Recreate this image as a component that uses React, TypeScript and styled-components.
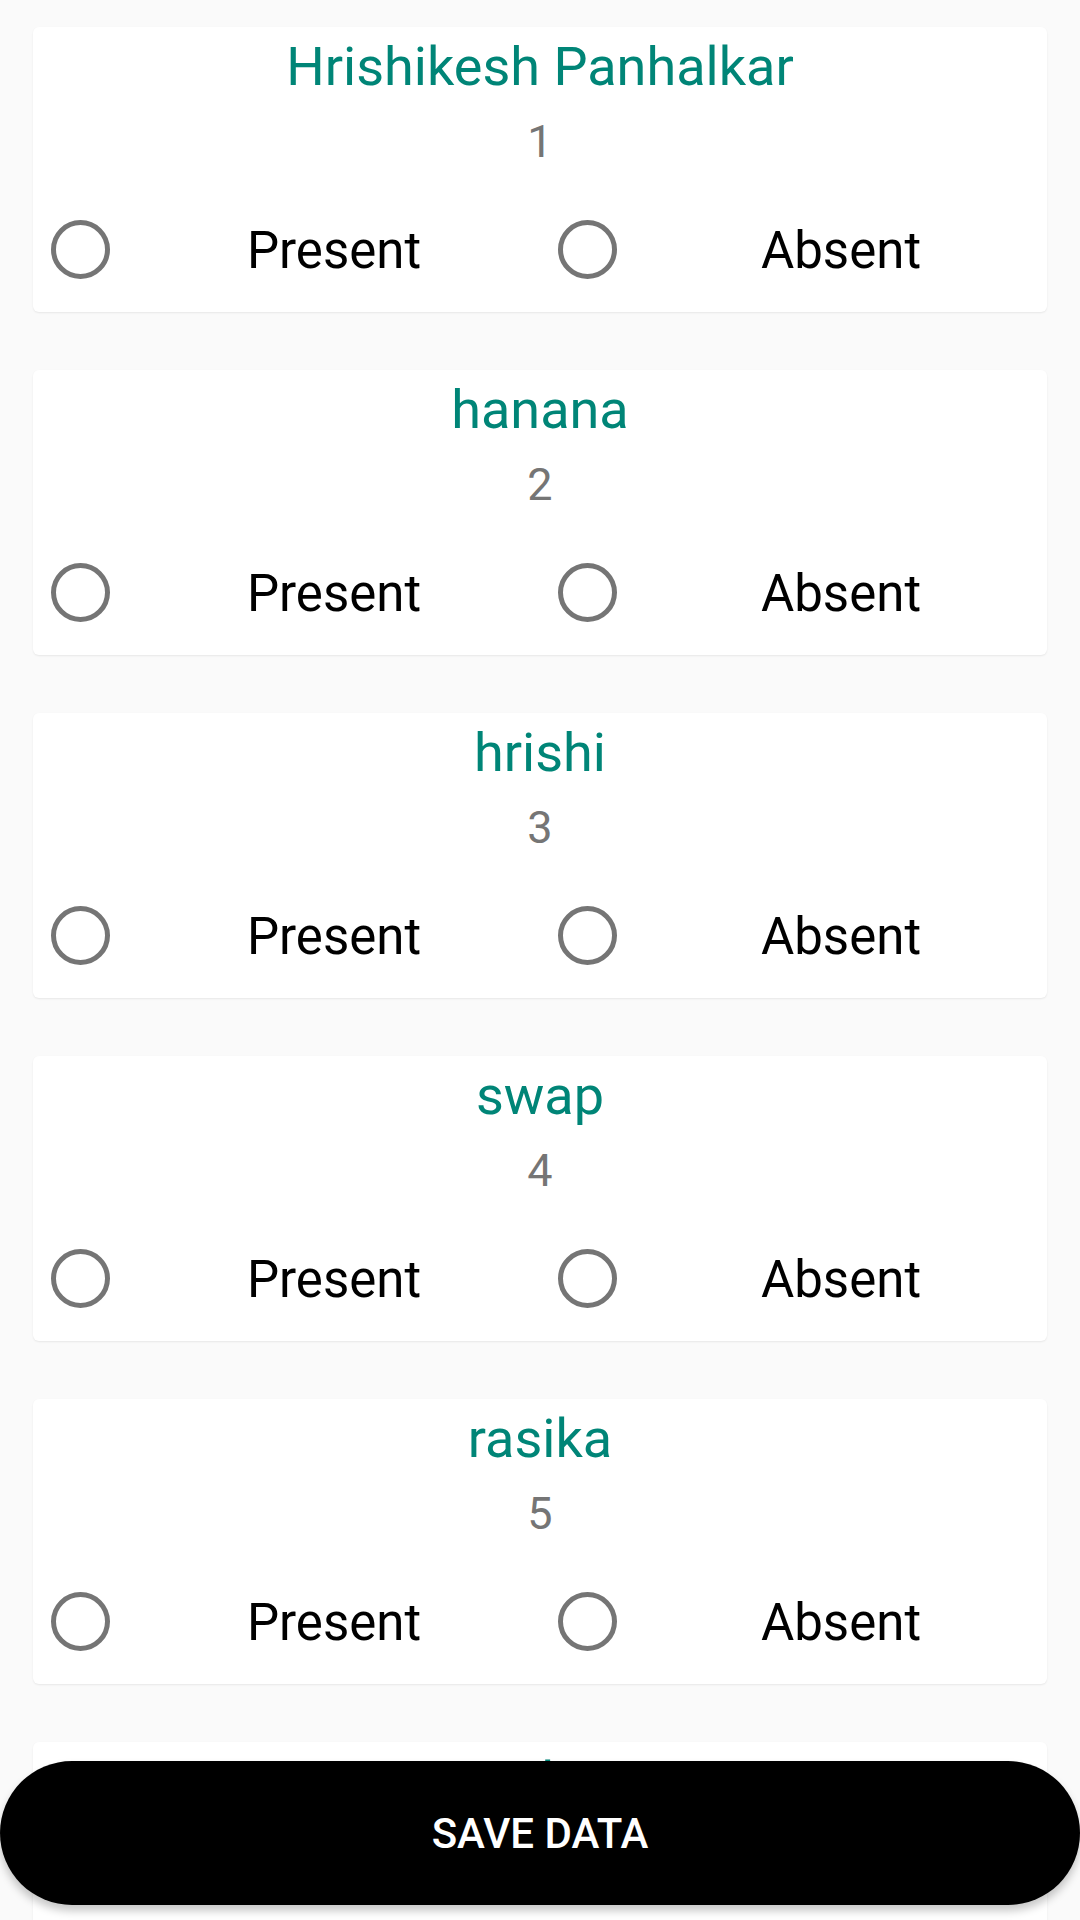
import React from 'react';
import styled, { createGlobalStyle } from 'styled-components';

const GlobalStyle = createGlobalStyle`
  html, body {
    margin: 0;
    padding: 0;
    background: #fafafa;
    font-family: Roboto, "Noto Sans", "Liberation Sans", sans-serif;
  }
`;

const Screen = styled.div`
  position: relative;
  width: 1080px;
  height: 1920px;
  overflow: hidden;
  background: #fafafa;
`;

const List = styled.div`
  display: flex;
  flex-direction: column;
  gap: 58px;
  padding: 27px 33px 0;
`;

const Card = styled.section`
  display: flex;
  flex-direction: column;
  align-items: center;
  height: 285px;
  box-sizing: border-box;
  padding: 9px 0 21px;
  background: #ffffff;
  border-radius: 6px;
  box-shadow: 0 1px 2px rgba(0, 0, 0, 0.08);
`;

const Name = styled.h2`
  margin: 0 0 17px;
  font-size: 54px;
  line-height: 62px;
  font-weight: 400;
  color: #008577;
`;

const RollNo = styled.div`
  margin-bottom: 38px;
  font-size: 45px;
  line-height: 54px;
  color: #757575;
`;

const RadioGroup = styled.div`
  align-self: stretch;
  display: grid;
  grid-template-columns: 1fr 1fr;
  height: 84px;
`;

const RadioButton = styled.label`
  display: flex;
  align-items: center;
`;

const RadioSlot = styled.span`
  display: flex;
  align-items: center;
  width: 95px;
  padding-left: 18px;
  box-sizing: border-box;
`;

const Ring = styled.span`
  display: block;
  width: 59px;
  height: 59px;
  box-sizing: border-box;
  border: 5px solid #757575;
  border-radius: 50%;
`;

const RadioLabel = styled.span`
  flex: 1;
  padding-top: 4px;
  text-align: center;
  font-size: 51px;
  line-height: 60px;
  color: #000000;
`;

const SaveButton = styled.button`
  position: absolute;
  left: 0;
  right: 0;
  bottom: 15px;
  height: 144px;
  border: none;
  border-radius: 72px;
  background: #000000;
  color: #ffffff;
  font-family: Roboto, "Noto Sans", "Liberation Sans", sans-serif;
  font-size: 42px;
  font-weight: 500;
  text-transform: uppercase;
  box-shadow: 0 6px 8px rgba(0, 0, 0, 0.22);
`;

const students = ['Hrishikesh Panhalkar', 'hanana', 'hrishi', 'swap', 'rasika', 'omkar'];

const Radio = ({ label }: { label: string }) => (
  <RadioButton>
    <RadioSlot>
      <Ring />
    </RadioSlot>
    <RadioLabel>{label}</RadioLabel>
  </RadioButton>
);

export default function App() {
  return (
    <Screen>
      <GlobalStyle />
      <List>
        {students.map((name, i) => (
          <Card key={name}>
            <Name>{name}</Name>
            <RollNo>{i + 1}</RollNo>
            <RadioGroup>
              <Radio label='Present' />
              <Radio label='Absent' />
            </RadioGroup>
          </Card>
        ))}
      </List>
      <SaveButton>Save Data</SaveButton>
    </Screen>
  );
}
